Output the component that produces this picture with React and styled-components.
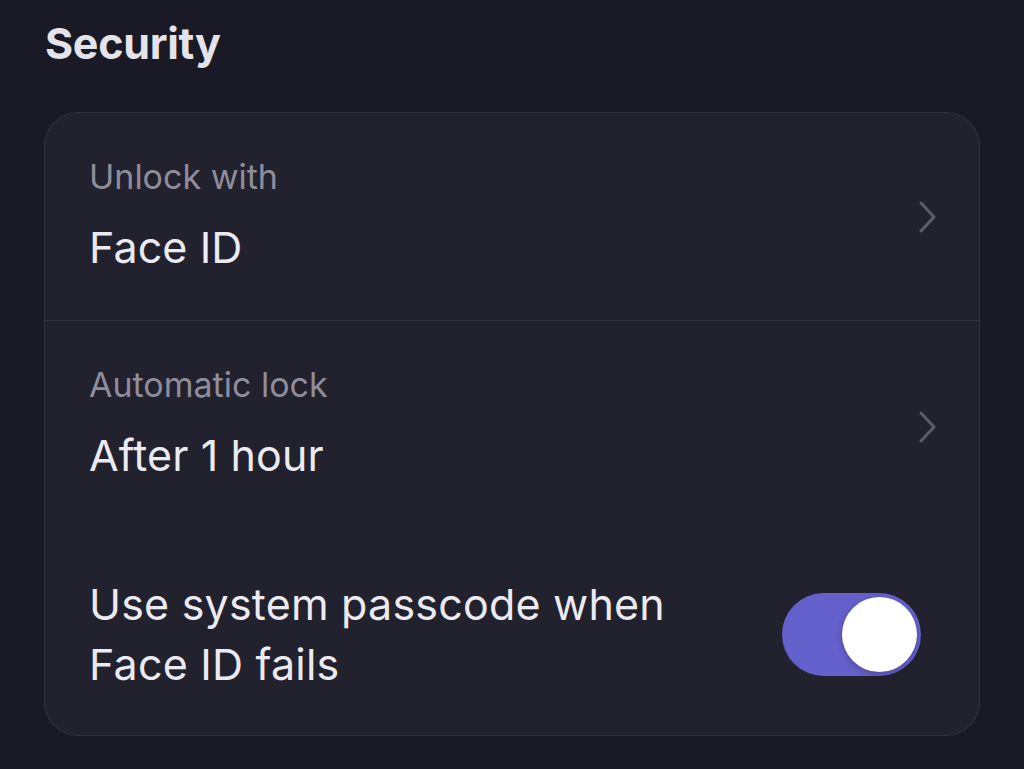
import React, { useState } from 'react'
import styled, { createGlobalStyle } from 'styled-components'

const GlobalStyle = createGlobalStyle`
  html, body {
    margin: 0;
    padding: 0;
    background: #1a1a26;
  }
  body {
    font-family: Inter, "Liberation Sans", sans-serif;
    -webkit-font-smoothing: antialiased;
  }
`

const Page = styled.div`
  width: 1024px;
  height: 769px;
  box-sizing: border-box;
  padding: 17px 44px 0 44px;
  background: #1a1a26;
  overflow: hidden;
`

const Title = styled.h2`
  margin: 0 0 0 1px;
  font-size: 43px;
  line-height: 52px;
  font-weight: 700;
  color: #e4e3ea;
  letter-spacing: -0.3px;
`

const Card = styled.div`
  margin-top: 43px;
  width: 936px;
  box-sizing: border-box;
  background: #22212e;
  border: 1.5px solid #32313e;
  border-radius: 34px;
  overflow: hidden;
`

const Row = styled.div`
  display: flex;
  align-items: ${p => (p.top ? 'flex-start' : 'center')};
  justify-content: space-between;
  height: ${p => p.h}px;
  box-sizing: border-box;
  padding: ${p => p.pt || 0}px 39px 0 44px;
  border-bottom: ${p => (p.divider ? '1.5px solid #353441' : 'none')};
  & > svg {
    align-self: center;
    margin-top: ${p => -(p.pt || 0)}px;
  }
`

const Texts = styled.div`
  display: flex;
  flex-direction: column;
  gap: 25px;
`

const Label = styled.div`
  font-size: 34px;
  line-height: 40px;
  color: #8f8d9b;
`

const Value = styled.div`
  font-size: 43px;
  line-height: 50px;
  color: #ebeaf0;
  letter-spacing: 0.1px;
`

const Multi = styled.div`
  font-size: 43px;
  line-height: 60px;
  color: #ebeaf0;
  letter-spacing: 0.2px;
`

const Chevron = () => (
  <svg width="24" height="34" viewBox="0 0 24 34" fill="none">
    <path d="M5 3 L18 17 L5 31" stroke="#5d5c6a" strokeWidth="3" strokeLinecap="round" strokeLinejoin="round" />
  </svg>
)

const Toggle = styled.button`
  width: 139px;
  height: 83px;
  border-radius: 42px;
  border: none;
  padding: 0;
  margin-right: 19px;
  background: ${p => (p.on ? '#6460cc' : '#3a3948')};
  position: relative;
  cursor: pointer;
  &::after {
    content: "";
    position: absolute;
    top: 4px;
    left: ${p => (p.on ? '60px' : '4px')};
    width: 75px;
    height: 75px;
    border-radius: 50%;
    background: #ffffff;
    box-shadow: 0 2px 6px rgba(0, 0, 0, 0.25);
    transition: left .2s ease;
  }
`

export default function App() {
  const [on, setOn] = useState(true)
  return (
    <Page>
      <GlobalStyle />
      <Title>Security</Title>
      <Card>
        <Row h={208} top pt={44} divider>
          <Texts>
            <Label>Unlock with</Label>
            <Value>Face ID</Value>
          </Texts>
          <Chevron />
        </Row>
        <Row h={212} top pt={44}>
          <Texts>
            <Label>Automatic lock</Label>
            <Value>After 1 hour</Value>
          </Texts>
          <Chevron />
        </Row>
        <Row h={202}>
          <Multi>
            Use system passcode when<br />Face ID fails
          </Multi>
          <Toggle on={on ? 1 : 0} onClick={() => setOn(!on)} />
        </Row>
      </Card>
    </Page>
  )
}
